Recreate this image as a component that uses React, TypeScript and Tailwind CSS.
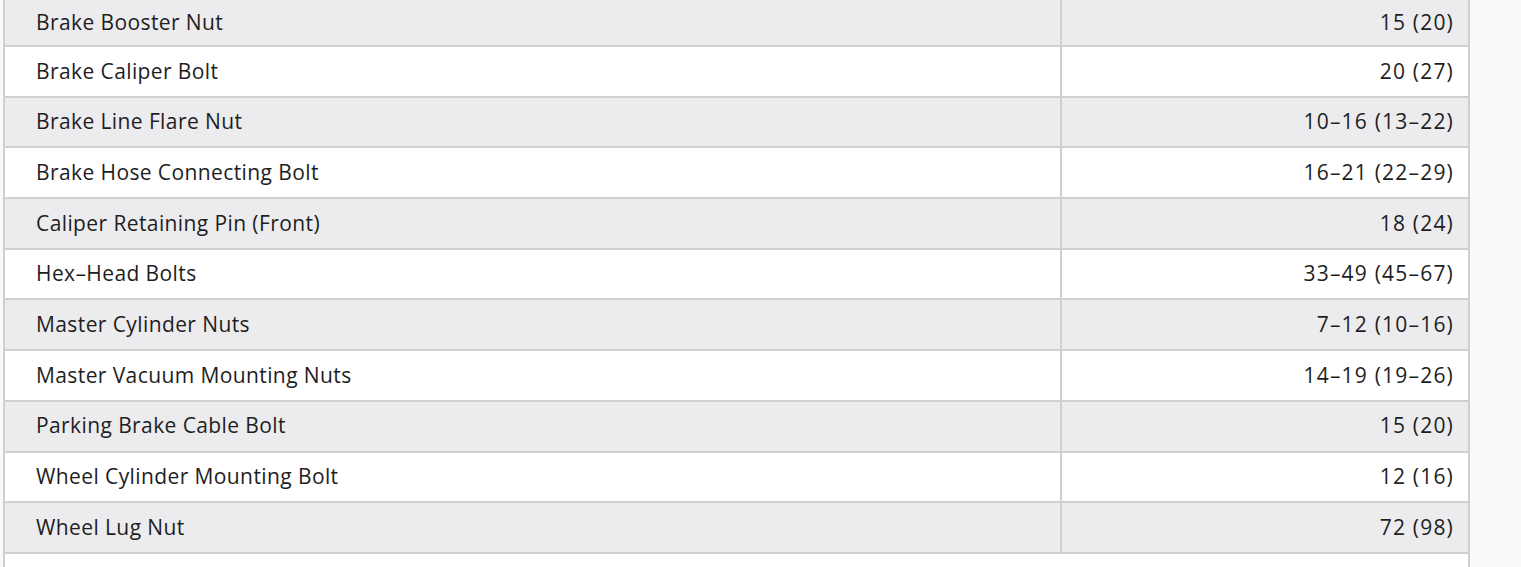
import React from "react";

const rows: [string, string][] = [
  ["Brake Booster Nut", "15 (20)"],
  ["Brake Caliper Bolt", "20 (27)"],
  ["Brake Line Flare Nut", "10-16 (13-22)"],
  ["Brake Hose Connecting Bolt", "16-21 (22-29)"],
  ["Caliper Retaining Pin (Front)", "18 (24)"],
  ["Hex-Head Bolts", "33-49 (45-67)"],
  ["Master Cylinder Nuts", "7-12 (10-16)"],
  ["Master Vacuum Mounting Nuts", "14-19 (19-26)"],
  ["Parking Brake Cable Bolt", "15 (20)"],
  ["Wheel Cylinder Mounting Bolt", "12 (16)"],
  ["Wheel Lug Nut", "72 (98)"],
];

export default function App() {
  return (
    <div className="h-[567px] overflow-hidden bg-[#f9f9f9] flex" style={{ fontFamily: "'Open Sans', sans-serif" }}>
      <div className="ml-[3px] w-[1467px] border-l-2 border-r-2 border-[#d0d0d0] text-[21px] tracking-[0.4px] text-[#1e1e1e]">
        {rows.map(([name, val], i) => (
          <div
            key={name}
            className={`grid grid-cols-[1057px_1fr] border-b-2 border-[#d0d0d0] ${i % 2 === 0 ? "bg-[#ececee]" : "bg-white"} ${i === 0 ? "h-[47px]" : "h-[50.7px]"}`}
          >
            <div className="border-r-2 border-[#d0d0d0] pl-[31px] flex items-center">{name.replace(/-/g, "\u2013")}</div>
            <div className="pr-[14px] flex items-center justify-end tracking-[1.2px]">{val.replace(/-/g, "\u2013")}</div>
          </div>
        ))}
        <div className="h-[30px] bg-white" />
      </div>
    </div>
  );
}
